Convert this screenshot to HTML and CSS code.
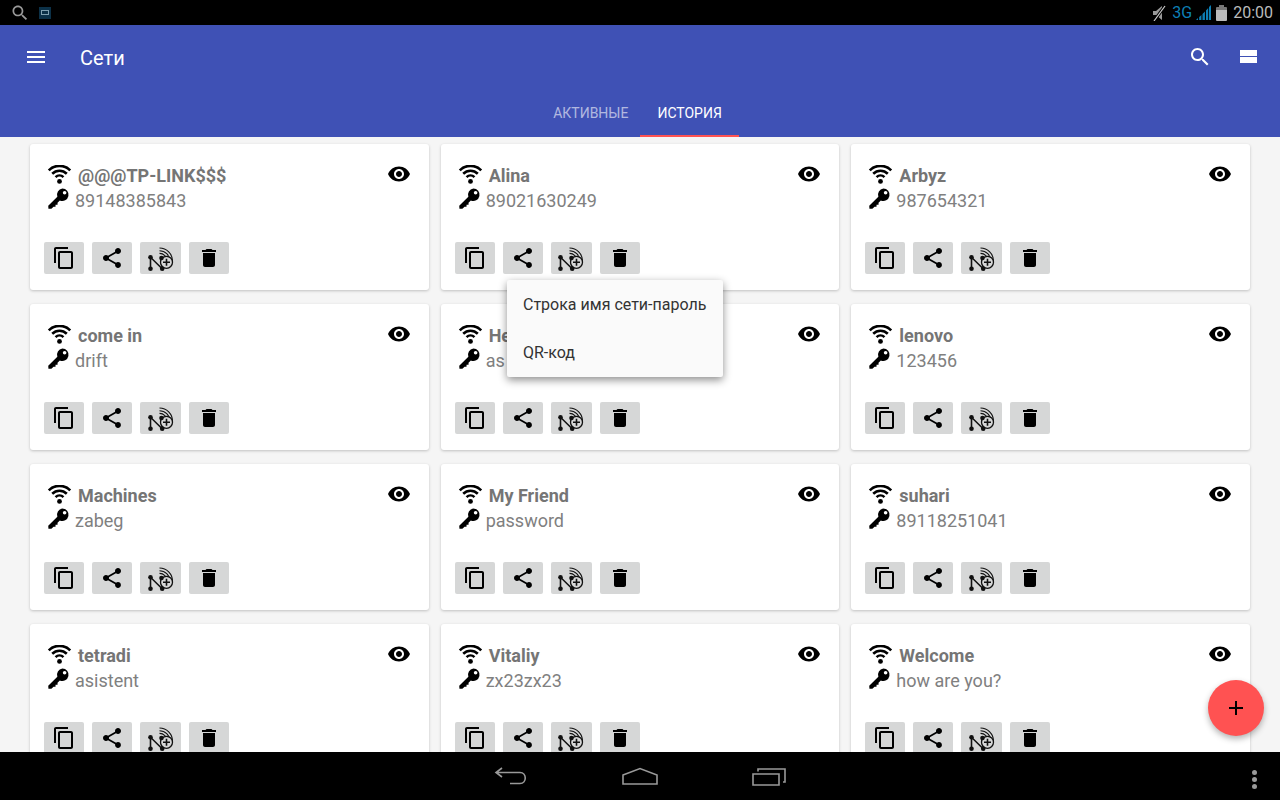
FILE: index.html
```html
<!DOCTYPE html>
<html lang="ru">
<head>
    <meta charset="UTF-8">
    <title>Сети</title>
    <link rel="stylesheet" href="styles.css">
</head>
<body>
    <svg class="icon-defs" width="0" height="0">
        <symbol id="i-search" viewBox="0 0 24 24"><path d="M15.5 14h-.79l-.28-.27C15.41 12.59 16 11.11 16 9.5 16 5.91 13.09 3 9.5 3S3 5.91 3 9.5 5.91 16 9.5 16c1.61 0 3.09-.59 4.23-1.57l.27.28v.79l5 4.99L20.49 19l-4.99-5zm-6 0C7.01 14 5 11.99 5 9.5S7.01 5 9.5 5 14 7.01 14 9.5 11.99 14 9.5 14z"/></symbol>
        <symbol id="i-wifi" viewBox="0 0 24 18">
            <g fill="none" stroke="#000" stroke-width="2.500">
                <path d="M1.700 5a14.500 14.500 0 0 1 20.600 0"/>
                <path d="M5 8.300a10 10 0 0 1 14 0"/>
                <path d="M8.200 11.500a5.500 5.500 0 0 1 7.600 0"/>
            </g>
            <circle cx="12" cy="15.600" r="2.300"/>
        </symbol>
        <symbol id="i-key" viewBox="0 0 24 24"><path fill-rule="evenodd" d="M16 1.500a6.500 6.500 0 1 1-2.600 12.460L11 16.400v2.100H8.900v2.100H6.800L4.600 22.800 1.500 22.600l-.2-3 9.500-9.500A6.500 6.500 0 0 1 16 1.500zm2.400 2.600a1.900 1.900 0 1 0 0 3.800 1.900 1.900 0 0 0 0-3.800z"/></symbol>
        <symbol id="i-eye" viewBox="0 0 24 24"><path d="M12 4.500C7 4.500 2.730 7.610 1 12c1.730 4.390 6 7.500 11 7.500s9.270-3.110 11-7.500c-1.730-4.390-6-7.500-11-7.500zM12 17c-2.760 0-5-2.240-5-5s2.240-5 5-5 5 2.240 5 5-2.240 5-5 5zm0-8c-1.660 0-3 1.340-3 3s1.340 3 3 3 3-1.340 3-3-1.340-3-3-3z"/></symbol>
        <symbol id="i-copy" viewBox="0 0 24 24"><path d="M16 1H4c-1.100 0-2 .9-2 2v14h2V3h12V1zm3 4H8c-1.100 0-2 .9-2 2v14c0 1.100.9 2 2 2h11c1.100 0 2-.9 2-2V7c0-1.100-.9-2-2-2zm0 16H8V7h11v14z"/></symbol>
        <symbol id="i-share" viewBox="0 0 24 24"><path d="M18 16.080c-.76 0-1.440.3-1.960.77L8.910 12.700c.05-.23.09-.46.09-.7s-.04-.47-.09-.7l7.050-4.110c.54.5 1.250.81 2.040.81 1.660 0 3-1.340 3-3s-1.340-3-3-3-3 1.340-3 3c0 .24.04.47.09.7L8.040 9.810C7.500 9.310 6.790 9 6 9c-1.660 0-3 1.340-3 3s1.340 3 3 3c.79 0 1.500-.31 2.040-.81l7.120 4.160c-.05.21-.08.43-.08.65 0 1.610 1.310 2.920 2.920 2.920 1.610 0 2.920-1.310 2.920-2.920s-1.310-2.920-2.920-2.920z"/></symbol>
        <symbol id="i-net" viewBox="0 0 26 26">
            <g fill="none" stroke="#111">
                <path d="M2.500 23.700V12.300l11.700 11.400L13.500 13" stroke-width="1.600"/>
                <path d="M11.500 3A13 13 0 0 1 24.500 16" stroke-width="1.100"/>
                <path d="M11.500 5.700A10.300 10.300 0 0 1 21.800 16" stroke-width="1.100"/>
                <path d="M11.500 8.400A7.600 7.600 0 0 1 19.100 16" stroke-width="1.100"/>
                <circle cx="18.500" cy="17.300" r="6" fill="#d6d7d7" stroke-width="1.300"/>
                <path d="M18.500 13.800v7M15 17.300h7" stroke-width="1.600"/>
            </g>
            <circle cx="2.500" cy="12.300" r="2.300" fill="#111"/>
            <circle cx="2.500" cy="23.700" r="2.300" fill="#111"/>
            <circle cx="14.200" cy="23.700" r="2.300" fill="#111"/>
            <circle cx="13.500" cy="13" r="2.300" fill="#111"/>
        </symbol>
        <symbol id="i-delete" viewBox="0 0 24 24"><path d="M6 19c0 1.100.9 2 2 2h8c1.100 0 2-.9 2-2V7H6v12zM19 4h-3.500l-1-1h-5l-1 1H5v2h14V4z"/></symbol>
    </svg>

    <div class="status-bar">
        <svg class="status-search"><use href="#i-search"/></svg>
        <span class="status-app"><span class="status-app-inner"></span></span>
        <span class="status-spacer"></span>
        <svg class="status-mute" viewBox="0 0 14 16">
            <path d="M1 6h3l6-5v14l-6-5H1z" fill="#999"/>
            <path d="M2 16L13 1" stroke="#000" stroke-width="3"/>
            <path d="M2 16L13 1" stroke="#CCC" stroke-width="1.200"/>
        </svg>
        <span class="status-net">3G</span>
        <svg class="status-signal" viewBox="0 0 15 15">
            <path d="M0 15h2v-2L0 15zM3.200 15h2.200V10L3.200 12zM6.500 15h2.400V6.500L6.500 9zM10 15h2.200V3L10 5.500zM13 15h2V0l-2 2z" fill="#0d7fb5"/>
        </svg>
        <span class="status-battery"></span>
        <span class="status-time">20:00</span>
    </div>

    <header class="app-bar">
        <div class="toolbar">
            <svg class="icon-24 icon-white" viewBox="0 0 24 24"><path d="M3 18h18v-2H3v2zm0-5h18v-2H3v2zm0-7v2h18V6H3z"/></svg>
            <span class="toolbar-title">Сети</span>
            <svg class="icon-24 icon-white"><use href="#i-search"/></svg>
            <svg class="icon-24 icon-white" viewBox="0 0 24 24"><path d="M4 18h17v-6H4v6zM4 5v6h17V5H4z"/></svg>
        </div>
        <nav class="tabs">
            <span class="tab">АКТИВНЫЕ</span>
            <span class="tab tab-active">ИСТОРИЯ</span>
        </nav>
    </header>

    <main class="content">
        <div class="network-grid">
            <section class="card">
                <div class="card-row"><svg class="icon-wifi"><use href="#i-wifi"/></svg><span class="card-name">@@@TP-LINK$$$</span><svg class="icon-eye"><use href="#i-eye"/></svg></div>
                <div class="card-row"><svg class="icon-key"><use href="#i-key"/></svg><span class="card-pass">89148385843</span></div>
                <div class="card-actions">
                    <span class="action"><svg><use href="#i-copy"/></svg></span>
                    <span class="action"><svg><use href="#i-share"/></svg></span>
                    <span class="action action-net"><svg><use href="#i-net"/></svg></span>
                    <span class="action"><svg><use href="#i-delete"/></svg></span>
                </div>
            </section>
            <section class="card">
                <div class="card-row"><svg class="icon-wifi"><use href="#i-wifi"/></svg><span class="card-name">Alina</span><svg class="icon-eye"><use href="#i-eye"/></svg></div>
                <div class="card-row"><svg class="icon-key"><use href="#i-key"/></svg><span class="card-pass">89021630249</span></div>
                <div class="card-actions">
                    <span class="action"><svg><use href="#i-copy"/></svg></span>
                    <span class="action"><svg><use href="#i-share"/></svg></span>
                    <span class="action action-net"><svg><use href="#i-net"/></svg></span>
                    <span class="action"><svg><use href="#i-delete"/></svg></span>
                </div>
            </section>
            <section class="card">
                <div class="card-row"><svg class="icon-wifi"><use href="#i-wifi"/></svg><span class="card-name">Arbyz</span><svg class="icon-eye"><use href="#i-eye"/></svg></div>
                <div class="card-row"><svg class="icon-key"><use href="#i-key"/></svg><span class="card-pass">987654321</span></div>
                <div class="card-actions">
                    <span class="action"><svg><use href="#i-copy"/></svg></span>
                    <span class="action"><svg><use href="#i-share"/></svg></span>
                    <span class="action action-net"><svg><use href="#i-net"/></svg></span>
                    <span class="action"><svg><use href="#i-delete"/></svg></span>
                </div>
            </section>
            <section class="card">
                <div class="card-row"><svg class="icon-wifi"><use href="#i-wifi"/></svg><span class="card-name">come in</span><svg class="icon-eye"><use href="#i-eye"/></svg></div>
                <div class="card-row"><svg class="icon-key"><use href="#i-key"/></svg><span class="card-pass">drift</span></div>
                <div class="card-actions">
                    <span class="action"><svg><use href="#i-copy"/></svg></span>
                    <span class="action"><svg><use href="#i-share"/></svg></span>
                    <span class="action action-net"><svg><use href="#i-net"/></svg></span>
                    <span class="action"><svg><use href="#i-delete"/></svg></span>
                </div>
            </section>
            <section class="card">
                <div class="card-row"><svg class="icon-wifi"><use href="#i-wifi"/></svg><span class="card-name">He</span><svg class="icon-eye"><use href="#i-eye"/></svg></div>
                <div class="card-row"><svg class="icon-key"><use href="#i-key"/></svg><span class="card-pass">as</span></div>
                <div class="card-actions">
                    <span class="action"><svg><use href="#i-copy"/></svg></span>
                    <span class="action"><svg><use href="#i-share"/></svg></span>
                    <span class="action action-net"><svg><use href="#i-net"/></svg></span>
                    <span class="action"><svg><use href="#i-delete"/></svg></span>
                </div>
            </section>
            <section class="card">
                <div class="card-row"><svg class="icon-wifi"><use href="#i-wifi"/></svg><span class="card-name">lenovo</span><svg class="icon-eye"><use href="#i-eye"/></svg></div>
                <div class="card-row"><svg class="icon-key"><use href="#i-key"/></svg><span class="card-pass">123456</span></div>
                <div class="card-actions">
                    <span class="action"><svg><use href="#i-copy"/></svg></span>
                    <span class="action"><svg><use href="#i-share"/></svg></span>
                    <span class="action action-net"><svg><use href="#i-net"/></svg></span>
                    <span class="action"><svg><use href="#i-delete"/></svg></span>
                </div>
            </section>
            <section class="card">
                <div class="card-row"><svg class="icon-wifi"><use href="#i-wifi"/></svg><span class="card-name">Machines</span><svg class="icon-eye"><use href="#i-eye"/></svg></div>
                <div class="card-row"><svg class="icon-key"><use href="#i-key"/></svg><span class="card-pass">zabeg</span></div>
                <div class="card-actions">
                    <span class="action"><svg><use href="#i-copy"/></svg></span>
                    <span class="action"><svg><use href="#i-share"/></svg></span>
                    <span class="action action-net"><svg><use href="#i-net"/></svg></span>
                    <span class="action"><svg><use href="#i-delete"/></svg></span>
                </div>
            </section>
            <section class="card">
                <div class="card-row"><svg class="icon-wifi"><use href="#i-wifi"/></svg><span class="card-name">My Friend</span><svg class="icon-eye"><use href="#i-eye"/></svg></div>
                <div class="card-row"><svg class="icon-key"><use href="#i-key"/></svg><span class="card-pass">password</span></div>
                <div class="card-actions">
                    <span class="action"><svg><use href="#i-copy"/></svg></span>
                    <span class="action"><svg><use href="#i-share"/></svg></span>
                    <span class="action action-net"><svg><use href="#i-net"/></svg></span>
                    <span class="action"><svg><use href="#i-delete"/></svg></span>
                </div>
            </section>
            <section class="card">
                <div class="card-row"><svg class="icon-wifi"><use href="#i-wifi"/></svg><span class="card-name">suhari</span><svg class="icon-eye"><use href="#i-eye"/></svg></div>
                <div class="card-row"><svg class="icon-key"><use href="#i-key"/></svg><span class="card-pass">89118251041</span></div>
                <div class="card-actions">
                    <span class="action"><svg><use href="#i-copy"/></svg></span>
                    <span class="action"><svg><use href="#i-share"/></svg></span>
                    <span class="action action-net"><svg><use href="#i-net"/></svg></span>
                    <span class="action"><svg><use href="#i-delete"/></svg></span>
                </div>
            </section>
            <section class="card">
                <div class="card-row"><svg class="icon-wifi"><use href="#i-wifi"/></svg><span class="card-name">tetradi</span><svg class="icon-eye"><use href="#i-eye"/></svg></div>
                <div class="card-row"><svg class="icon-key"><use href="#i-key"/></svg><span class="card-pass">asistent</span></div>
                <div class="card-actions">
                    <span class="action"><svg><use href="#i-copy"/></svg></span>
                    <span class="action"><svg><use href="#i-share"/></svg></span>
                    <span class="action action-net"><svg><use href="#i-net"/></svg></span>
                    <span class="action"><svg><use href="#i-delete"/></svg></span>
                </div>
            </section>
            <section class="card">
                <div class="card-row"><svg class="icon-wifi"><use href="#i-wifi"/></svg><span class="card-name">Vitaliy</span><svg class="icon-eye"><use href="#i-eye"/></svg></div>
                <div class="card-row"><svg class="icon-key"><use href="#i-key"/></svg><span class="card-pass">zx23zx23</span></div>
                <div class="card-actions">
                    <span class="action"><svg><use href="#i-copy"/></svg></span>
                    <span class="action"><svg><use href="#i-share"/></svg></span>
                    <span class="action action-net"><svg><use href="#i-net"/></svg></span>
                    <span class="action"><svg><use href="#i-delete"/></svg></span>
                </div>
            </section>
            <section class="card">
                <div class="card-row"><svg class="icon-wifi"><use href="#i-wifi"/></svg><span class="card-name">Welcome</span><svg class="icon-eye"><use href="#i-eye"/></svg></div>
                <div class="card-row"><svg class="icon-key"><use href="#i-key"/></svg><span class="card-pass">how are you?</span></div>
                <div class="card-actions">
                    <span class="action"><svg><use href="#i-copy"/></svg></span>
                    <span class="action"><svg><use href="#i-share"/></svg></span>
                    <span class="action action-net"><svg><use href="#i-net"/></svg></span>
                    <span class="action"><svg><use href="#i-delete"/></svg></span>
                </div>
            </section>
        </div>
    </main>

    <div class="popup-menu">
        <div class="popup-item">Строка имя сети-пароль</div>
        <div class="popup-item">QR-код</div>
    </div>

    <div class="fab">
        <svg viewBox="0 0 24 24"><path d="M19 13h-6v6h-2v-6H5v-2h6V5h2v6h6v2z"/></svg>
    </div>

    <footer class="nav-bar">
        <svg class="nav-back" viewBox="0 0 34 20">
            <path d="M8 2L2 6.500l6 4.500M2 6.500h24c7 0 7 11 0 11H16"/>
        </svg>
        <svg class="nav-home" viewBox="0 0 36 18">
            <path d="M1 8l17-6.500L35 8v9H1z"/>
        </svg>
        <svg class="nav-recent" viewBox="0 0 34 20">
            <path d="M1 8h26v11H1zM6 5.500V3h27v13h-2"/>
        </svg>
        <span class="nav-dots"><i></i><i></i><i></i></span>
    </footer>
</body>
</html>
```

FILE: styles.css
```css
html, body {
    margin: 0;
    height: 100%;
}

body {
    position: relative;
    display: flex;
    flex-direction: column;
    width: 1280px;
    height: 800px;
    overflow: hidden;
    background-color: #F5F5F5;
    font-family: 'Roboto', sans-serif;
}

.icon-defs {
    position: absolute;
}

/* status bar */

.status-bar {
    display: flex;
    align-items: center;
    flex: none;
    height: 25px;
    padding: 0 7px 0 10px;
    background-color: #000;
    color: #BBB;
}

.status-search {
    width: 20px;
    height: 20px;
    fill: #999;
}

.status-app {
    display: flex;
    align-items: center;
    justify-content: center;
    width: 12px;
    height: 12px;
    margin-left: 9px;
    background-color: #0C3148;
}

.status-app-inner {
    width: 8px;
    height: 5px;
    border: 1px solid #7FA0B0;
    box-sizing: border-box;
}

.status-spacer {
    flex: 1;
}

.status-mute {
    width: 14px;
    height: 16px;
}

.status-net {
    margin-left: 6px;
    font-size: 16px;
    color: #0D7FB5;
}

.status-signal {
    width: 15px;
    height: 15px;
    margin-left: 4px;
}

.status-battery {
    position: relative;
    width: 11px;
    height: 14px;
    margin: 2px 0 0 5px;
    border-radius: 1px;
    background: linear-gradient(#777 0, #777 3px, #BBB 3px);
}

.status-battery::before {
    content: "";
    position: absolute;
    top: -2px;
    left: 3px;
    width: 5px;
    height: 2px;
    background-color: #777;
}

.status-time {
    margin-left: 6px;
    font-size: 16px;
}

/* app bar and tabs */

.app-bar {
    flex: none;
    height: 112px;
    background-color: #3F51B5;
    color: #FFF;
}

.toolbar {
    display: flex;
    align-items: center;
    gap: 24px;
    height: 64px;
    padding: 0 20px 0 24px;
}

.toolbar-title {
    flex: 1;
    margin-left: 8px;
    padding-top: 2px;
    font-size: 20px;
}

.icon-24 {
    flex: none;
    width: 24px;
    height: 24px;
}

.icon-white {
    fill: #FFF;
}

.tabs {
    display: flex;
    justify-content: center;
    height: 48px;
    padding-right: 4px;
}

.tab {
    display: flex;
    align-items: center;
    box-sizing: border-box;
    padding: 0 12px 0 16px;
    font-size: 14px;
    color: rgba(255, 255, 255, 0.6);
}

.tab-active {
    padding: 2px 17px 0;
    color: #FFF;
    border-bottom: 2px solid #FF5252;
}

/* cards */

.content {
    flex: 1;
    overflow: hidden;
}

.network-grid {
    display: grid;
    grid-template-columns: repeat(3, 1fr);
    gap: 14px 12px;
    padding: 7px 30px;
}

.card {
    display: flex;
    flex-direction: column;
    box-sizing: border-box;
    height: 146px;
    padding: 19px 18px 16px 14px;
    border-radius: 3px;
    background-color: #FFF;
    box-shadow: 0 1px 3px rgba(0, 0, 0, 0.22);
}

.card-row {
    display: flex;
    align-items: center;
    height: 25px;
    padding-left: 3px;
}

.icon-wifi {
    flex: none;
    width: 25px;
    height: 19px;
    margin: -3px 6px 0 0;
}

.icon-key {
    flex: none;
    width: 23px;
    height: 23px;
    margin: -4px 5px 0 0;
}

.icon-eye {
    flex: none;
    width: 24px;
    height: 24px;
    margin: -3px 0 0 auto;
}

.card-name {
    font-size: 18px;
    font-weight: 700;
    color: #757575;
}

.card-pass {
    font-size: 18px;
    color: #808080;
}

.card-actions {
    display: flex;
    gap: 8px;
    margin-top: auto;
}

.action {
    display: flex;
    align-items: center;
    justify-content: center;
    width: 40px;
    height: 32px;
    border-radius: 2px;
    background-color: #D6D7D7;
}

.action svg {
    width: 24px;
    height: 24px;
}

.action-net {
    width: 41px;
}

.action-net svg {
    width: 26px;
    height: 26px;
}

/* popup menu and fab */

.popup-menu {
    position: absolute;
    top: 280px;
    left: 507px;
    width: 216px;
    padding-bottom: 1px;
    border-radius: 2px;
    background-color: #FAFAFA;
    box-shadow: 0 3px 8px rgba(0, 0, 0, 0.45);
}

.popup-item {
    display: flex;
    align-items: center;
    height: 48px;
    padding: 0 16px;
    font-size: 16px;
    color: #333;
}

.fab {
    position: absolute;
    top: 680px;
    left: 1208px;
    display: flex;
    align-items: center;
    justify-content: center;
    width: 56px;
    height: 56px;
    border-radius: 50%;
    background-color: #FF5252;
    box-shadow: 0 3px 6px rgba(0, 0, 0, 0.3);
}

.fab svg {
    width: 24px;
    height: 24px;
}

/* bottom nav */

.nav-bar {
    position: relative;
    z-index: 1;
    display: flex;
    align-items: center;
    justify-content: center;
    flex: none;
    gap: 94px;
    height: 48px;
    background-color: #000;
}

.nav-bar svg {
    fill: none;
    stroke: #999;
    stroke-width: 1.600;
}

.nav-back {
    width: 34px;
    height: 20px;
}

.nav-home {
    width: 36px;
    height: 18px;
}

.nav-recent {
    width: 34px;
    height: 20px;
}

.nav-dots {
    position: absolute;
    top: 18px;
    left: 1252px;
    display: flex;
    flex-direction: column;
    gap: 2px;
}

.nav-dots i {
    width: 5px;
    height: 5px;
    border-radius: 50%;
    background-color: #999;
}
```
